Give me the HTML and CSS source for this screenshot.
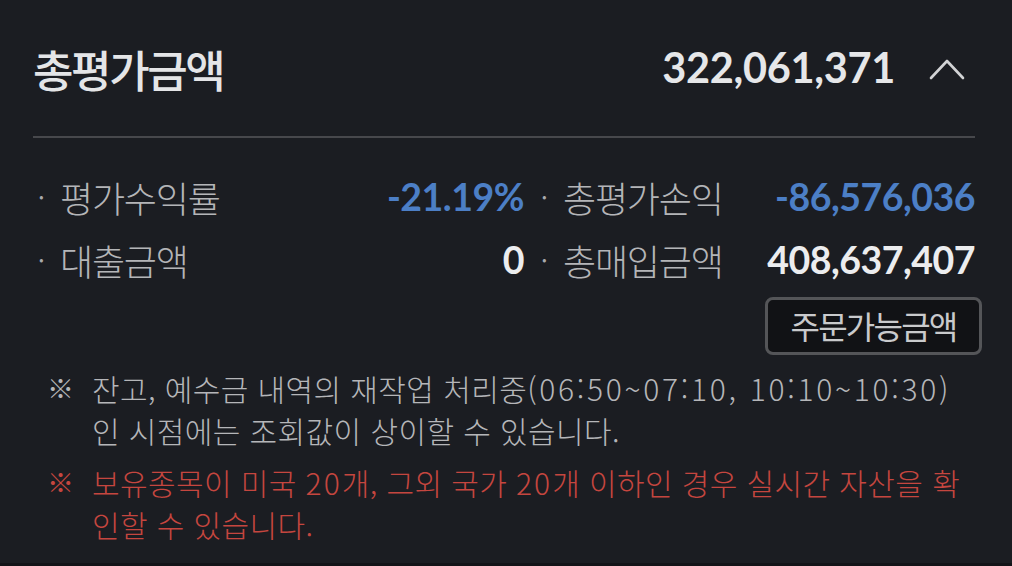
FILE: index.html
```html
<!DOCTYPE html>
<html lang="ko">
<head>
<meta charset="utf-8">
<title>총평가금액</title>
<link rel="stylesheet" href="styles.css">
</head>
<body>
<div class="panel">
  <div class="header">
    <h1 class="title">총평가금액</h1>
    <div class="header-right">
      <span class="total">322,061,371</span>
      <svg class="chevron" width="36" height="22" viewBox="0 0 36 22"><polyline points="2,20 18,3 34,20" fill="none" stroke="#d2d3d5" stroke-width="2.6" stroke-linecap="round" stroke-linejoin="round"/></svg>
    </div>
  </div>

  <div class="stats">
    <div class="stat">
      <span class="bullet">·</span><span class="label">평가수익률</span><span class="value blue">-21.19%</span>
    </div>
    <div class="stat">
      <span class="bullet">·</span><span class="label">총평가손익</span><span class="value blue">-86,576,036</span>
    </div>
    <div class="stat">
      <span class="bullet">·</span><span class="label">대출금액</span><span class="value">0</span>
    </div>
    <div class="stat">
      <span class="bullet">·</span><span class="label">총매입금액</span><span class="value">408,637,407</span>
    </div>
  </div>

  <div class="actions">
    <button class="btn">주문가능금액</button>
  </div>

  <div class="notes">
    <div class="note">
      <span class="mark">※</span>
      <p class="note-text">잔고, 예수금 내역의 재작업 처리중<span class="time">(06:50~07:10, 10:10~10:30)</span><br>인 시점에는 조회값이 상이할 수 있습니다.</p>
    </div>
    <div class="note red">
      <span class="mark">※</span>
      <p class="note-text">보유종목이 미국 <span class="num">20</span>개, 그외 국가 <span class="num">20</span>개 이하인 경우 실시간 자산을 확<br>인할 수 있습니다.</p>
    </div>
  </div>
</div>
</body>
</html>
```

FILE: styles.css
```css
* { box-sizing: border-box; }

html, body {
  margin: 0;
  padding: 0;
  background: #1b1d22;
}

body {
  height: 566px;
  display: flex;
  flex-direction: column;
  font-family: "Noto Sans CJK KR", "Noto Sans", sans-serif;
  overflow: hidden;
}

.panel {
  flex: 1;
  padding: 0 37px 0 33px;
  border-bottom: 3px solid #131418;
}

.header {
  height: 138px;
  display: flex;
  align-items: center;
  justify-content: space-between;
  border-bottom: 2px solid #47484c;
}

.title {
  margin: 0;
  font-size: 44px;
  font-weight: 500;
  letter-spacing: -2.4px;
  color: #e4e5e7;
  line-height: 1;
  padding-top: 2px;
}

.header-right {
  display: flex;
  align-items: center;
  gap: 34px;
  margin-right: 10px;
}

.total {
  font-family: "Lato", "Liberation Sans", sans-serif;
  font-weight: 700;
  font-size: 41.5px;
  color: #e6e7e9;
  letter-spacing: -0.3px;
  line-height: 1;
}

.chevron {
  display: block;
  margin-top: 2px;
}

.stats {
  margin-top: 27px;
  display: grid;
  grid-template-columns: 491px 1fr;
  column-gap: 12px;
}

.stat {
  display: flex;
  align-items: center;
  height: 63px;
}

.bullet {
  width: 27px;
  font-size: 24px;
  color: #a9aaad;
  padding-left: 5px;
}

.label {
  font-size: 36px;
  font-weight: 300;
  letter-spacing: -1.2px;
  color: #b4b5b8;
  line-height: 1;
}

.value {
  margin-left: auto;
  font-family: "Lato", "Liberation Sans", sans-serif;
  font-weight: 700;
  font-size: 37.5px;
  color: #ecedef;
  line-height: 1;
  letter-spacing: -0.5px;
}

.value.blue { color: #4c7fc6; }

.actions {
  display: flex;
  justify-content: flex-end;
  margin-top: 6px;
  margin-right: -7px;
}

.btn {
  width: 217px;
  height: 58px;
  background: #111215;
  border: 3px solid #545558;
  border-radius: 8px;
  color: #c9cacc;
  font-family: "Noto Sans CJK KR", "Noto Sans", sans-serif;
  font-size: 32px;
  letter-spacing: -1.8px;
  line-height: 1;
  padding: 0 0 3px;
}

.notes {
  margin-top: 12px;
  padding-left: 14px;
  display: flex;
  flex-direction: column;
  gap: 10px;
}

.note {
  display: flex;
  color: #b5b6b9;
  font-size: 30px;
  line-height: 42px;
}

.note.red { color: #c5463f; }

.mark {
  width: 45px;
  flex: none;
  font-size: 27px;
}

.note-text {
  margin: 0;
  font-weight: 300;
  letter-spacing: 0.4px;
}

.time { letter-spacing: 2.7px; }
.num { letter-spacing: 2px; }
```
